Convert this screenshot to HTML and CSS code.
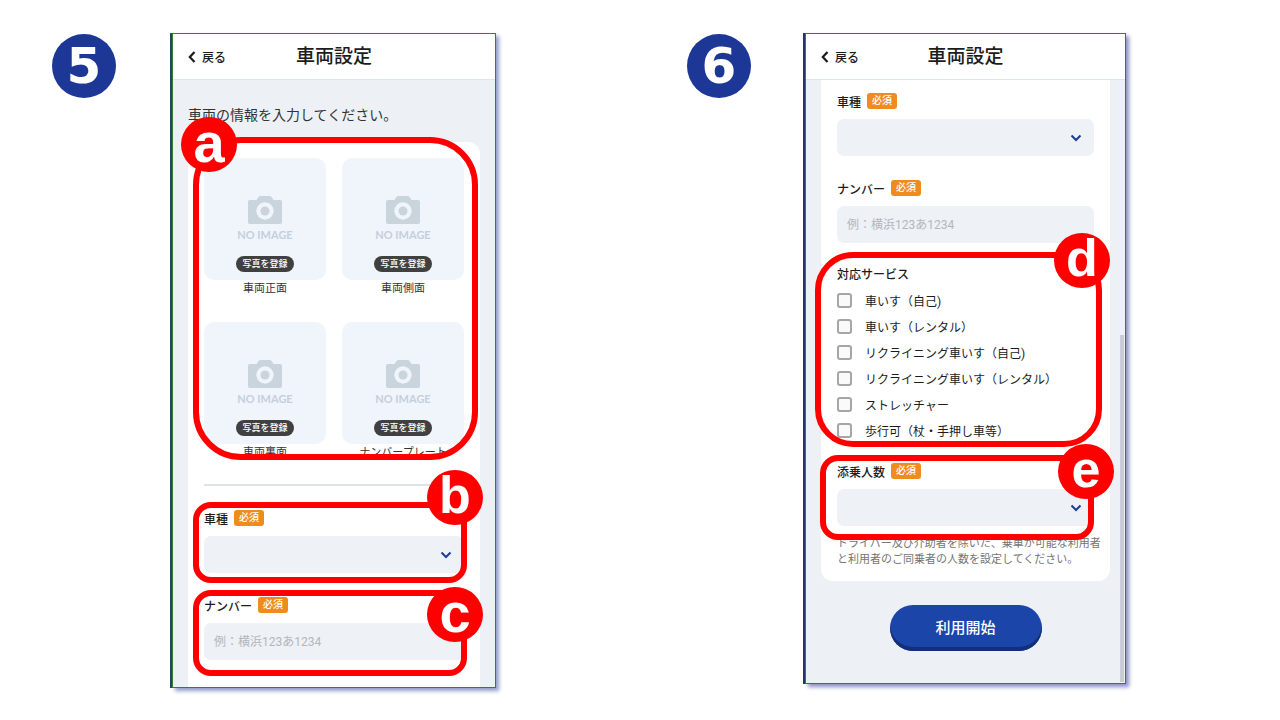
FILE: index.html
```
<!DOCTYPE html>
<html lang="ja">
<head>
    <meta charset="UTF-8">
    <meta name="viewport" content="width=device-width, initial-scale=1.0">
    <title>車両設定</title>
    <link rel="stylesheet" href="styles.css">
</head>
<body>

    <!-- shared icons -->
    <svg class="sprite" aria-hidden="true">
        <symbol id="camera" viewBox="0 0 34 28">
            <path fill-rule="evenodd" d="M2 4H8.500L10.500 1Q11.200 0 12.500 0H21.500Q22.800 0 23.500 1L25.500 4H32Q34 4 34 6V26Q34 28 32 28H2Q0 28 0 26V6Q0 4 2 4ZM17 6.500a8.500 8.500 0 1 0 0 17a8.500 8.500 0 1 0 0-17Z"/>
            <circle cx="17" cy="15" r="8.500" fill="#f0f4fb"/>
            <circle cx="17" cy="15" r="4.500"/>
        </symbol>
        <symbol id="down" viewBox="0 0 12 8">
            <path d="M1.500 1.500L6 6L10.500 1.500" fill="none" stroke="currentColor" stroke-width="2"/>
        </symbol>
        <symbol id="back" viewBox="0 0 8 12">
            <path d="M6.500 1L1.800 6L6.500 11" fill="none" stroke="currentColor" stroke-width="2.200"/>
        </symbol>
    </svg>

    <main class="steps">
        <section class="step">
            <div class="step-number">5</div>
            <div class="phone">
                <header class="header">
                    <a href="#" class="back"><svg><use href="#back"/></svg>戻る</a>
                    <h1>車両設定</h1>
                </header>
                <div class="content">
                    <p class="intro">車両の情報を入力してください。</p>
                    <div class="card card-open">
                        <div class="group photos">
                            <div class="photo">
                                <div class="tile">
                                    <svg class="camera"><use href="#camera"/></svg>
                                    <span class="no-image">NO IMAGE</span>
                                    <button type="button">写真を登録</button>
                                </div>
                                <div class="caption">車両正面</div>
                            </div>
                            <div class="photo">
                                <div class="tile">
                                    <svg class="camera"><use href="#camera"/></svg>
                                    <span class="no-image">NO IMAGE</span>
                                    <button type="button">写真を登録</button>
                                </div>
                                <div class="caption">車両側面</div>
                            </div>
                            <div class="photo">
                                <div class="tile">
                                    <svg class="camera"><use href="#camera"/></svg>
                                    <span class="no-image">NO IMAGE</span>
                                    <button type="button">写真を登録</button>
                                </div>
                                <div class="caption">車両裏面</div>
                            </div>
                            <div class="photo">
                                <div class="tile">
                                    <svg class="camera"><use href="#camera"/></svg>
                                    <span class="no-image">NO IMAGE</span>
                                    <button type="button">写真を登録</button>
                                </div>
                                <div class="caption">ナンバープレート</div>
                            </div>
                            <div class="mark mark-a"><span class="letter letter-large">a</span></div>
                        </div>
                        <hr class="divider">
                        <div class="group field">
                            <div class="label-row">
                                <label for="type5">車種</label>
                                <span class="required">必須</span>
                            </div>
                            <div class="select">
                                <select id="type5"><option></option></select>
                                <svg><use href="#down"/></svg>
                            </div>
                            <div class="mark mark-b"><span class="letter">b</span></div>
                        </div>
                        <div class="group field">
                            <div class="label-row">
                                <label for="number5">ナンバー</label>
                                <span class="required">必須</span>
                            </div>
                            <input type="text" id="number5" placeholder="例：横浜123あ1234">
                            <div class="mark mark-c"><span class="letter letter-large">c</span></div>
                        </div>
                    </div>
                </div>
            </div>
        </section>

        <section class="step step-second">
            <div class="step-number">6</div>
            <div class="phone">
                <header class="header">
                    <a href="#" class="back"><svg><use href="#back"/></svg>戻る</a>
                    <h1>車両設定</h1>
                </header>
                <div class="content">
                    <div class="card card-end">
                        <div class="group field">
                            <div class="label-row">
                                <label for="type6">車種</label>
                                <span class="required">必須</span>
                            </div>
                            <div class="select">
                                <select id="type6"><option></option></select>
                                <svg><use href="#down"/></svg>
                            </div>
                        </div>
                        <div class="group field">
                            <div class="label-row">
                                <label for="number6">ナンバー</label>
                                <span class="required">必須</span>
                            </div>
                            <input type="text" id="number6" placeholder="例：横浜123あ1234">
                        </div>
                        <div class="group services" role="group" aria-labelledby="services-title">
                            <div class="services-title" id="services-title">対応サービス</div>
                            <label><input type="checkbox">車いす（自己)</label>
                            <label><input type="checkbox">車いす（レンタル）</label>
                            <label><input type="checkbox">リクライニング車いす（自己)</label>
                            <label><input type="checkbox">リクライニング車いす（レンタル）</label>
                            <label><input type="checkbox">ストレッチャー</label>
                            <label><input type="checkbox">歩行可（杖・手押し車等）</label>
                            <div class="mark mark-d"><span class="letter">d</span></div>
                        </div>
                        <div class="group field">
                            <div class="label-row">
                                <label for="people">添乗人数</label>
                                <span class="required">必須</span>
                            </div>
                            <div class="select">
                                <select id="people"><option></option></select>
                                <svg><use href="#down"/></svg>
                            </div>
                            <div class="mark mark-e"><span class="letter">e</span></div>
                        </div>
                        <p class="hint">ドライバー及び介助者を除いた、乗車が可能な利用者<br>と利用者のご同乗者の人数を設定してください。</p>
                    </div>
                    <button type="button" class="start">利用開始</button>
                </div>
                <div class="scrollbar"></div>
            </div>
        </section>
    </main>

</body>
</html>
```
FILE: styles.css
```
* {
    box-sizing: border-box;
}

body {
    margin: 0;
    background-color: white;
    color: #1c1c1c;
    font-family: Roboto, "Noto Sans CJK JP", sans-serif;
    font-size: 12px;
}

button, input, select {
    font-family: inherit;
}

.sprite {
    display: none;
}

.steps {
    display: grid;
    grid-template-columns: minmax(0, 1fr) minmax(0, 1fr);
    align-items: start;
}

.step {
    display: flex;
    align-items: flex-start;
    gap: 56px;
    padding: 33px 144px 32px 52px;
}

.step-second {
    gap: 54px;
    padding-left: 47px;
    padding-right: 154px;
}

.step-number {
    flex: none;
    width: 64px;
    height: 64px;
    margin-top: 1px;
    border-radius: 50%;
    background-color: #1c3796;
    color: white;
    font: bold 50px/64px "DejaVu Sans", sans-serif;
    text-align: center;
}

.phone {
    position: relative;
    flex: 1;
    min-width: 0;
    border: 1px solid #3d7a35;
    background-color: #edf1f6;
    box-shadow: -2px 0 0 #1d4a5c, 3px 3px 4px #8f9dc9;
}

.step-second .phone {
    box-shadow: -2px 0 0 #1f3864, 3px 3px 4px #8890c4;
}

/* header */
.header {
    display: grid;
    grid-template-columns: 1fr auto 1fr;
    align-items: center;
    height: 46px;
    padding: 0 15px;
    border-bottom: 1px solid #dfe4ea;
    background-color: white;
}

.header h1 {
    margin: 0;
    font-size: 19px;
    font-weight: 500;
    line-height: 24px;
}

.back {
    display: flex;
    align-items: center;
    gap: 6px;
    color: inherit;
    font-weight: 500;
    text-decoration: none;
}

.back svg {
    width: 8px;
    height: 12px;
}

/* content */
.content {
    padding: 0 15px;
}

.intro {
    margin: 0;
    padding: 24px 0 16px;
    font-size: 14px;
    line-height: 22px;
    color: #333;
}

.card {
    padding: 16px;
    background-color: white;
}

.card-open {
    padding-bottom: 27px;
    border-radius: 12px 12px 0 0;
}

.card-end {
    padding-top: 13px;
    padding-bottom: 13px;
    border-radius: 0 0 12px 12px;
}

.group {
    position: relative;
}

.photos {
    display: grid;
    grid-template-columns: 1fr 1fr;
    gap: 24px 16px;
}

.tile {
    display: flex;
    flex-direction: column;
    align-items: center;
    aspect-ratio: 1;
    padding-top: 38px;
    border-radius: 10px;
    background-color: #f0f4fb;
}

.camera {
    flex: none;
    width: 34px;
    height: 28px;
    fill: #c9d4dd;
}

.no-image {
    margin-top: 3px;
    font: 11px/16px Lato, sans-serif;
    font-weight: bold;
    color: #c5cfdb;
}

.tile button {
    height: 16px;
    margin-top: 13px;
    padding: 0 6px;
    border: none;
    border-radius: 8px;
    background-color: #404040;
    color: white;
    font-size: 9px;
    font-weight: 500;
    line-height: 16px;
}

.caption {
    font-size: 11px;
    line-height: 18px;
    text-align: center;
    color: #333;
}

.divider {
    height: 2px;
    margin: 22px 0 24px;
    border: none;
    background-color: #dfe2e6;
}

.field + .field, .field + .services {
    margin-top: 24px;
}

.label-row {
    display: flex;
    align-items: center;
    gap: 6px;
    height: 16px;
    margin-bottom: 10px;
    font-weight: 500;
}

.required {
    padding: 0 5px;
    border-radius: 3px;
    background-color: #f08c1e;
    color: white;
    font-size: 10px;
    line-height: 16px;
}

.select {
    position: relative;
}

.select svg {
    position: absolute;
    top: 15px;
    right: 12px;
    width: 12px;
    height: 8px;
    color: #1c3d9a;
    pointer-events: none;
}

select, input[type="text"] {
    display: block;
    width: 100%;
    height: 37px;
    padding: 0 10px;
    border: none;
    border-radius: 7px;
    appearance: none;
    background-color: #eef1f6;
    font-size: 12px;
}

input::placeholder {
    color: #b3b7bc;
}

.services {
    margin-bottom: 20px;
}

.services-title {
    margin-bottom: 4px;
    font-weight: 500;
    line-height: 16px;
}

.services label {
    display: flex;
    align-items: center;
    gap: 13px;
    height: 26px;
}

input[type="checkbox"] {
    width: 15px;
    height: 15px;
    margin: 0;
    border: 2px solid #a6a6a6;
    border-radius: 3px;
    appearance: none;
    background-color: #fafafa;
}

.hint {
    margin: 10px 0 0;
    font-size: 11px;
    line-height: 16px;
    white-space: nowrap;
    color: #747474;
}

.start {
    display: block;
    width: 152px;
    height: 46px;
    margin: 24px auto 32px;
    padding: 0 0 4px;
    border: none;
    border-radius: 23px;
    background-color: #1b45a8;
    box-shadow: inset 0 -4px 0 #122f78;
    color: white;
    font-size: 15px;
    font-weight: 500;
}

.scrollbar {
    position: absolute;
    top: 301px;
    right: 1px;
    bottom: 1px;
    width: 4px;
    background-color: #c9ccd0;
}

/* red marks over the screens */
.mark {
    position: absolute;
    z-index: 1;
    border: 6px solid #f00;
    border-radius: 18px;
    pointer-events: none;
}

.letter {
    position: absolute;
    width: 56px;
    height: 55px;
    border-radius: 50%;
    background-color: #f00;
    color: white;
    font: bold 52px/50px "Liberation Sans", sans-serif;
    text-align: center;
}

.letter-large {
    font-size: 56px;
    line-height: 52px;
}

.mark-a {
    top: -21px;
    right: -14px;
    bottom: 2px;
    left: -11px;
    border-radius: 48px;
}

.mark-a .letter {
    top: -26px;
    left: -18px;
}

.mark-b {
    top: -8px;
    right: -3px;
    bottom: -10px;
    left: -11px;
}

.mark-b .letter {
    top: -38px;
    right: -22px;
}

.mark-c {
    top: -7px;
    right: -3px;
    bottom: -16px;
    left: -11px;
}

.mark-c .letter {
    top: -9px;
    right: -22px;
}

.mark-d {
    top: -15px;
    right: -8px;
    bottom: -4px;
    left: -22px;
    border-radius: 38px;
}

.mark-d .letter {
    top: -25px;
    right: -14px;
}

.mark-e {
    top: -8px;
    right: 0;
    bottom: -14px;
    left: -17px;
}

.mark-e .letter {
    top: -17px;
    right: -26px;
}
```
